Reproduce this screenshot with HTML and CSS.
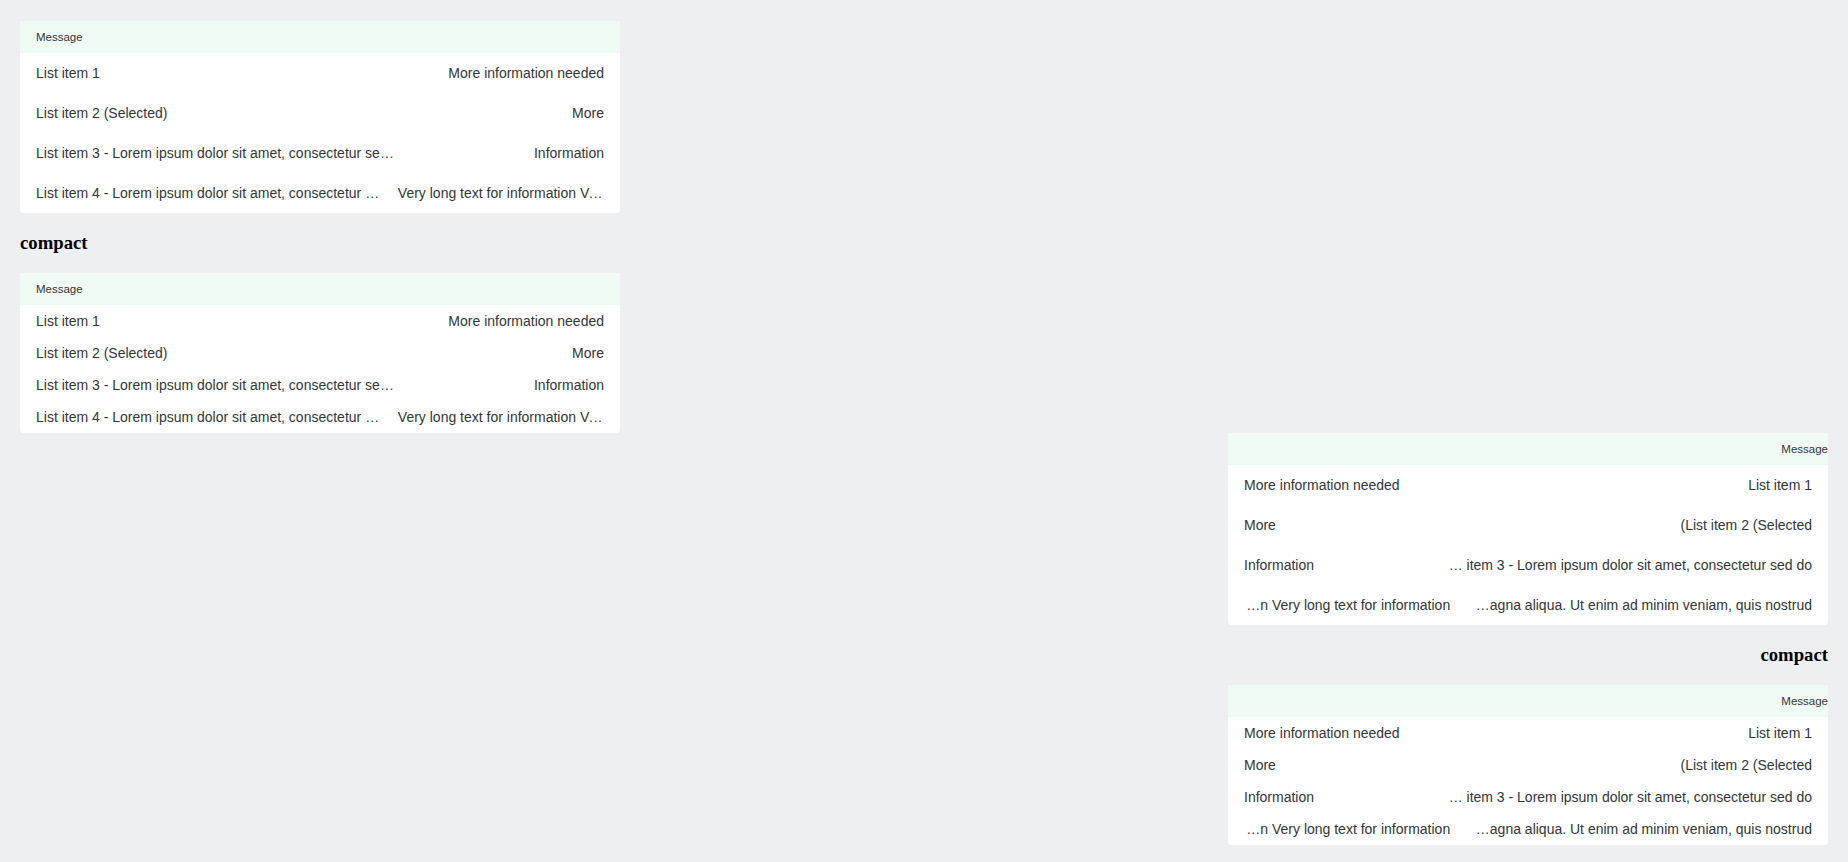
FILE: index.html
```html
<!DOCTYPE html>
<html lang="en">
<head>
<meta charset="utf-8">
<title>List</title>
<link rel="stylesheet" href="styles.css">
</head>
<body>
<div class="page">
  <section class="demo">
    <ul class="list">
      <li class="list-header">Message</li>
      <li class="item"><span class="title">List item 1</span><span class="secondary">More information needed</span></li>
      <li class="item"><span class="title">List item 2 (Selected)</span><span class="secondary">More</span></li>
      <li class="item"><span class="title">List item 3 - Lorem ipsum dolor sit amet, consectetur sed do</span><span class="secondary">Information</span></li>
      <li class="item"><span class="title">List item 4 - Lorem ipsum dolor sit amet, consectetur adipiscing elit, sed do eiusmod tempor incididunt ut labore et dolore magna aliqua. Ut enim ad minim veniam, quis nostrud</span><span class="secondary">Very long text for information Very long text for information</span></li>
    </ul>
    <h3 class="demo-title">compact</h3>
    <ul class="list list--compact">
      <li class="list-header">Message</li>
      <li class="item"><span class="title">List item 1</span><span class="secondary">More information needed</span></li>
      <li class="item"><span class="title">List item 2 (Selected)</span><span class="secondary">More</span></li>
      <li class="item"><span class="title">List item 3 - Lorem ipsum dolor sit amet, consectetur sed do</span><span class="secondary">Information</span></li>
      <li class="item"><span class="title">List item 4 - Lorem ipsum dolor sit amet, consectetur adipiscing elit, sed do eiusmod tempor incididunt ut labore et dolore magna aliqua. Ut enim ad minim veniam, quis nostrud</span><span class="secondary">Very long text for information Very long text for information</span></li>
    </ul>
  </section>
  <section class="demo" dir="rtl">
    <ul class="list">
      <li class="list-header">Message</li>
      <li class="item"><span class="title">List item 1</span><span class="secondary">More information needed</span></li>
      <li class="item"><span class="title">List item 2 (Selected<span class="iso">)</span></span><span class="secondary">More</span></li>
      <li class="item"><span class="title">List item 3 - Lorem ipsum dolor sit amet, consectetur sed do</span><span class="secondary">Information</span></li>
      <li class="item"><span class="title">List item 4 - Lorem ipsum dolor sit amet, consectetur adipiscing elit, sed do eiusmod tempor incididunt ut labore et dolore magna aliqua. Ut enim ad minim veniam, quis nostrud</span><span class="secondary">Very long text for information Very long text for information</span></li>
    </ul>
    <h3 class="demo-title">compact</h3>
    <ul class="list list--compact">
      <li class="list-header">Message</li>
      <li class="item"><span class="title">List item 1</span><span class="secondary">More information needed</span></li>
      <li class="item"><span class="title">List item 2 (Selected<span class="iso">)</span></span><span class="secondary">More</span></li>
      <li class="item"><span class="title">List item 3 - Lorem ipsum dolor sit amet, consectetur sed do</span><span class="secondary">Information</span></li>
      <li class="item"><span class="title">List item 4 - Lorem ipsum dolor sit amet, consectetur adipiscing elit, sed do eiusmod tempor incididunt ut labore et dolore magna aliqua. Ut enim ad minim veniam, quis nostrud</span><span class="secondary">Very long text for information Very long text for information</span></li>
    </ul>
  </section>
</div>
</body>
</html>
```
FILE: styles.css
```css
html, body {
  margin: 0;
  padding: 0;
  background: #edeff0;
}

.page {
  padding: 21px 20px 17px;
  font-family: "Liberation Sans", Arial, sans-serif;
  color: #32363a;
}

.demo {
  display: flex;
  flex-direction: column;
  align-items: flex-start;
}

.demo-title {
  margin: 19px 0;
  font-family: "Liberation Serif", "Times New Roman", serif;
  font-size: 18.72px;
  line-height: 22px;
  font-weight: bold;
  color: #000;
}

.list {
  list-style: none;
  margin: 0;
  padding: 0;
  width: 600px;
  background: #ffffff;
  border-radius: 0 0 4px 4px;
}

.list-header {
  height: 32px;
  display: flex;
  align-items: center;
  padding-left: 16px;
  background: #f1fbf5;
  font-size: 11.5px;
  color: #32363a;
}

.item {
  height: 40px;
  padding: 0 16px;
  display: flex;
  align-items: center;
  justify-content: space-between;
  font-size: 14px;
}

.list--compact .item {
  height: 32px;
}

.title {
  flex: 0 1 auto;
  min-width: 0;
  max-width: 64%;
  white-space: nowrap;
  overflow: hidden;
  text-overflow: ellipsis;
}

.iso {
  unicode-bidi: isolate;
}

.secondary {
  flex: 0 0 auto;
  max-width: 36.3%;
  margin-inline-start: 16px;
  white-space: nowrap;
  overflow: hidden;
  text-overflow: ellipsis;
}
```
